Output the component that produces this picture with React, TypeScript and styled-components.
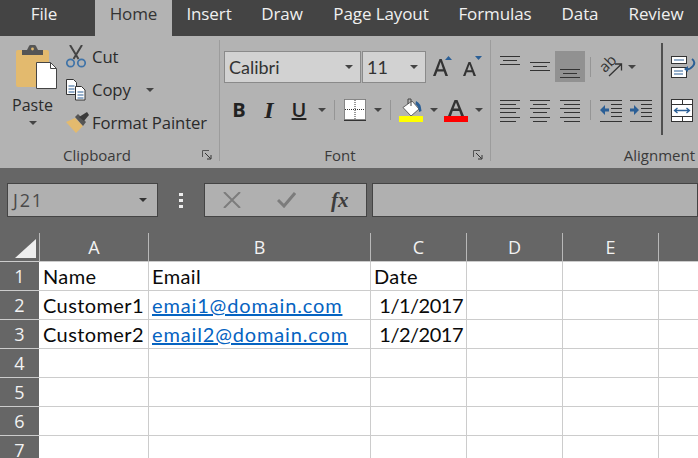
import * as React from "react";
import styled, { createGlobalStyle } from "styled-components";

const GlobalStyle = createGlobalStyle`
  html, body { margin: 0; padding: 0; background: #fff; }
  body { font-family: "Open Sans", "Liberation Sans", sans-serif; }
`;

const Page = styled.div`
  width: 698px;
  height: 458px;
  overflow: hidden;
  display: flex;
  flex-direction: column;
`;

/* ---- tabs ---- */
const TabBar = styled.div`
  height: 36px;
  flex: none;
  background: #444444;
  display: flex;
`;

const Tab = styled.div<{ $active?: boolean; $width: number; $padRight?: number }>`
  width: ${({ $width }) => $width}px;
  flex: none;
  box-sizing: border-box;
  padding: 3px ${({ $padRight }) => $padRight ?? 0}px 0 0;
  text-align: center;
  white-space: nowrap;
  font-size: 17px;
  line-height: 22px;
  letter-spacing: -0.1px;
  color: ${({ $active }) => ($active ? "#333333" : "#f0f0f0")};
  background: ${({ $active }) => ($active ? "#b3b3b3" : "transparent")};
`;

/* ---- ribbon ---- */
const Ribbon = styled.div`
  height: 132px;
  flex: none;
  background: #b3b3b3;
  display: flex;
  color: #2b2b2b;
`;

const Group = styled.div<{ $width: number }>`
  width: ${({ $width }) => $width}px;
  flex: none;
  position: relative;
  display: flex;
  flex-direction: column;
  box-sizing: border-box;
`;

const GroupBody = styled.div`
  flex: 1;
  display: flex;
  min-height: 0;
`;

const GroupLabel = styled.div<{ $padRight?: number; $end?: boolean }>`
  height: 26px;
  flex: none;
  box-sizing: border-box;
  padding: 2px ${({ $padRight }) => $padRight ?? 0}px 0 0;
  text-align: ${({ $end }) => ($end ? "right" : "center")};
  font-size: 15px;
  line-height: 22px;
  color: #3a3a3a;
`;

const GroupDivider = styled.div`
  width: 1px;
  flex: none;
  margin: 4px 0 7px;
  background: #9c9c9c;
`;

const Launcher = styled.svg`
  position: absolute;
  right: 7px;
  bottom: 8px;
  width: 10px;
  height: 10px;
`;

const Caret = styled.span<{ $gap?: number; $color?: string }>`
  display: inline-block;
  flex: none;
  width: 0;
  height: 0;
  margin-left: ${({ $gap }) => $gap ?? 0}px;
  border-left: 4px solid transparent;
  border-right: 4px solid transparent;
  border-top: 4px solid ${({ $color }) => $color ?? "#444444"};
`;

const Spacer = styled.span<{ $width: number }>`
  width: ${({ $width }) => $width}px;
  flex: none;
`;

const PasteColumn = styled.div`
  width: 66px;
  flex: none;
  padding-top: 8px;
  display: flex;
  flex-direction: column;
  align-items: center;
  box-sizing: border-box;
`;

const PasteGlyph = styled.div`
  height: 46px;
  margin-left: 8px;
`;

const PasteLabel = styled.div`
  margin-top: 3px;
  margin-left: -1px;
  font-size: 16px;
  line-height: 24px;
`;

const PasteCaret = styled.div`
  margin-top: 4px;
  height: 6px;
  display: flex;
`;

const SmallColumn = styled.div`
  padding-top: 4px;
  display: flex;
  flex-direction: column;
`;

const SmallRow = styled.div`
  height: 33px;
  display: flex;
  align-items: center;
  font-size: 16.7px;
  white-space: nowrap;
  letter-spacing: -0.1px;
`;

const SmallIcon = styled.div`
  width: 26px;
  flex: none;
  display: flex;
  align-items: center;
`;

const FontBody = styled.div`
  padding: 15px 0 0 4px;
  display: flex;
  flex-direction: column;
`;

const ComboRow = styled.div`
  height: 32px;
  display: flex;
  align-items: center;
`;

const Combo = styled.div<{ $width: number }>`
  width: ${({ $width }) => $width}px;
  height: 32px;
  box-sizing: border-box;
  flex: none;
  margin-right: 1px;
  padding: 0 7px 0 4px;
  background: #d2d2d2;
  border: 1px solid #8a8a8a;
  display: flex;
  align-items: center;
  justify-content: space-between;
  font-family: Lato, "Open Sans", sans-serif;
  font-size: 18px;
  color: #333333;
`;

const FormatRow = styled.div`
  margin-top: 13px;
  height: 28px;
  display: flex;
  align-items: center;
`;

const FormatLetter = styled.span<{ $width: number; $italic?: boolean; $under?: boolean }>`
  width: ${({ $width }) => $width}px;
  flex: none;
  text-align: center;
  font-family: ${({ $italic }) => ($italic ? '"Liberation Serif", serif' : '"Open Sans", sans-serif')};
  font-size: ${({ $italic }) => ($italic ? 24 : 20)}px;
  line-height: 26px;
  font-weight: ${({ $under }) => ($under ? 600 : 700)};
  font-style: ${({ $italic }) => ($italic ? "italic" : "normal")};
  text-decoration: ${({ $under }) => ($under ? "underline" : "none")};
  color: #222222;
`;

const VRule = styled.div<{ $left: number; $right: number; $height?: number }>`
  width: 1px;
  height: ${({ $height }) => $height ?? 20}px;
  flex: none;
  margin: 0 ${({ $right }) => $right}px 0 ${({ $left }) => $left}px;
  background: #959595;
`;

const AlignBody = styled.div`
  padding: 15px 0 0 4px;
  display: grid;
  grid-template-columns: repeat(3, 30px) 11px 30px 30px;
  grid-template-rows: 31px 28px;
  row-gap: 14px;
  justify-items: center;
  align-items: center;
`;

const AlignCell = styled.div<{ $active?: boolean }>`
  width: 30px;
  height: 100%;
  display: flex;
  align-items: center;
  justify-content: center;
  background: ${({ $active }) => ($active ? "#919191" : "transparent")};
`;

const OrientCell = styled.div`
  grid-column: span 2;
  justify-self: start;
  display: flex;
  align-items: center;
  padding-left: 4px;

  svg {
    overflow: visible;
  }
`;

const ThickRule = styled.div`
  position: absolute;
  left: 170px;
  top: 7px;
  width: 2px;
  height: 92px;
  background: #4f4f4f;
`;

const WrapColumn = styled.div`
  position: absolute;
  left: 180px;
  top: 20px;
  display: flex;
  flex-direction: column;
  gap: 19px;

  svg {
    display: block;
  }
`;

/* ---- formula bar ---- */
const FormulaBar = styled.div`
  height: 65px;
  flex: none;
  background: #666666;
  box-sizing: border-box;
  padding: 15px 0 0 7px;
  display: flex;
  align-items: flex-start;
`;

const FieldBox = styled.div<{ $width?: number }>`
  height: 34px;
  box-sizing: border-box;
  flex: ${({ $width }) => ($width ? "none" : "1")};
  width: ${({ $width }) => ($width ? `${$width}px` : "auto")};
  background: #b0b0b0;
  border: 1px solid #444444;
  display: flex;
  align-items: center;
`;

const NameBox = styled(FieldBox)`
  padding: 0 10px 0 5px;
  justify-content: space-between;
  font-size: 18px;
  letter-spacing: 1.8px;
  color: #4a4a4a;
`;

const Dots = styled.div`
  width: 46px;
  flex: none;
  height: 34px;
  padding-right: 1px;
  box-sizing: border-box;
  display: flex;
  flex-direction: column;
  align-items: center;
  justify-content: center;
  gap: 3px;

  span {
    width: 4px;
    height: 3px;
    background: #eeeeee;
  }
`;

const ActionBox = styled(FieldBox)`
  margin-right: 5px;
  padding-left: 18px;
  gap: 36px;
`;

const FxLabel = styled.span`
  margin-left: -1px;
  font-family: "Liberation Serif", serif;
  font-weight: 700;
  font-style: italic;
  font-size: 21px;
  color: #3c3c3c;
`;

/* ---- sheet ---- */
const Sheet = styled.div`
  flex: 1;
  display: grid;
  grid-template-columns: 39px 109px 222px 96px 96px 96px 40px;
  grid-template-rows: repeat(8, 29px);
  font-family: Lato, "Open Sans", sans-serif;
  background: #ffffff;
  overflow: hidden;
`;

const Corner = styled.div`
  background: #666666;
  border-bottom: 1px solid #cccccc;
  box-sizing: border-box;
  display: flex;
  align-items: flex-end;
  justify-content: flex-end;
  padding: 0 3px 3px 0;
`;

const ColHead = styled.div`
  background: #666666;
  border-left: 1px solid #b8b8b8;
  border-bottom: 1px solid #cccccc;
  box-sizing: border-box;
  display: flex;
  align-items: center;
  justify-content: center;
  font-family: "Open Sans", sans-serif;
  font-size: 18px;
  color: #f2f2f2;
`;

const RowHead = styled.div`
  background: #666666;
  border-bottom: 1px solid #cccccc;
  box-sizing: border-box;
  display: flex;
  align-items: center;
  justify-content: center;
  font-family: "Open Sans", sans-serif;
  font-size: 18px;
  color: #f2f2f2;
`;

const Cell = styled.div<{ $align?: "left" | "right"; $first?: boolean }>`
  border-left: ${({ $first }) => ($first ? "none" : "1px solid #cccccc")};
  border-bottom: 1px solid #cccccc;
  box-sizing: border-box;
  display: flex;
  align-items: center;
  justify-content: ${({ $align }) => ($align === "right" ? "flex-end" : "flex-start")};
  padding: 1px 3px 0 ${({ $first }) => ($first ? 4 : 3)}px;
  font-size: 20px;
  line-height: 27px;
  letter-spacing: ${({ $align }) => ($align === "right" ? -0.5 : 0.4)}px;
  color: #0a0a0a;
  white-space: nowrap;
  overflow: hidden;
`;

const LinkText = styled.span`
  color: #0563c1;
  letter-spacing: 0.85px;
  text-decoration: underline;
`;

/* ---- icons ---- */
const PasteIcon = () => (
  <svg width="42" height="46" viewBox="0 0 42 46">
    <rect x="0" y="6" width="33" height="37" rx="2" fill="#e3ba6e" />
    <path d="M6 6h5l2-4q.5-1 1.500-1h4q1 0 1.500 1l2 4h5v5H6z" fill="#555555" />
    <circle cx="16.500" cy="5" r="1.400" fill="#e3ba6e" />
    <path d="M20.500 18.500h14l6 6v20h-20z" fill="#ffffff" stroke="#444444" />
    <path d="M34.500 18.500v6h6" fill="none" stroke="#444444" />
  </svg>
);

const CutIcon = () => (
  <svg width="20" height="23" viewBox="0 0 20 23">
    <path d="M4 0l8.500 14M16 0L7.500 14" stroke="#444444" strokeWidth="2" />
    <circle cx="4.500" cy="18" r="3.700" fill="none" stroke="#3f73a8" strokeWidth="1.700" />
    <circle cx="15.500" cy="18" r="3.700" fill="none" stroke="#3f73a8" strokeWidth="1.700" />
  </svg>
);

const CopyIcon = () => (
  <svg width="20" height="22" viewBox="0 0 20 22">
    <path d="M.5.500h7l3 3v12H.500z" fill="#ffffff" stroke="#333333" />
    <path d="M2.500 7h6M2.500 10h6M2.500 13h6" stroke="#2b5f96" />
    <path d="M9.500 7.500h6l3.500 3.500v10H9.500z" fill="#ffffff" stroke="#333333" />
    <path d="M11.500 13h6M11.500 16h6M11.500 19h6" stroke="#2b5f96" />
  </svg>
);

const BrushIcon = () => (
  <svg width="23" height="21" viewBox="0 0 23 21">
    <path d="M0 10l9-4 8 8-7 7z" fill="#e3ba6e" />
    <path d="M9 5l3-3 8 8-3 4z" fill="#555555" />
    <path d="M13 5l8-5 2 3-5 6z" fill="#3a3a3a" />
  </svg>
);

const LauncherIcon = () => (
  <Launcher viewBox="0 0 10 10">
    <path d="M.5 7V.5H7" fill="none" stroke="#555555" />
    <path d="M3 3l5.500 5.500M9 5v4H5" fill="none" stroke="#333333" />
  </Launcher>
);

const GrowIcon = () => (
  <svg width="20" height="24" viewBox="0 0 20 24">
    <path d="M1 21L7.500 4h2.200L16 21h-2.600l-1.600-4.600H5.300L3.600 21zM6.100 14.200h4.900L8.600 7z" fill="#333333" fillRule="evenodd" />
    <path d="M13 5l3.500-4L20 5z" fill="#2b5f96" />
  </svg>
);

const ShrinkIcon = () => (
  <svg width="20" height="24" viewBox="0 0 20 24">
    <path d="M1 21L6.500 7h2L14 21h-2.400l-1.300-3.800H4.700L3.400 21zM5.400 15.200h4.200L7.500 9.500z" fill="#333333" fillRule="evenodd" />
    <path d="M13 1h7l-3.500 4z" fill="#2b5f96" />
  </svg>
);

const BordersIcon = () => (
  <svg width="22" height="22" viewBox="0 0 22 22">
    <rect x="0.500" y="0.500" width="21" height="20" fill="#ffffff" stroke="#333333" strokeDasharray="1 1" />
    <path d="M11 1v20M1 10.500h20" stroke="#333333" strokeDasharray="1 1" />
    <path d="M0 21.500h22" stroke="#333333" />
  </svg>
);

const FillIcon = () => (
  <svg width="24" height="25" viewBox="0 0 24 25">
    <path d="M4 9.500l9-6.500 7 8-8 7z" fill="#ffffff" stroke="#444444" strokeWidth="0.800" />
    <path d="M12 8V1H9v5" fill="none" stroke="#444444" />
    <path d="M17 3q5 2 5.500 10l-2.500 1q0-5-3.500-8z" fill="#2b5f96" />
    <rect x="0" y="18" width="24" height="6" fill="#ffff00" />
  </svg>
);

const ColorAIcon = () => (
  <svg width="24" height="25" viewBox="0 0 24 25">
    <path d="M4 18L10.500 2h3L20 18h-3l-1.700-5H8.700L7 18zM9.600 10.500h4.800L12 4.500z" fill="#333333" fillRule="evenodd" />
    <rect x="0" y="18" width="24" height="6" fill="#ff0000" />
  </svg>
);

type Line = [number, number, number];

const LinesIcon = ({ lines }: { lines: Line[] }) => (
  <svg width="22" height="24" viewBox="0 0 22 24">
    {lines.map(([x1, x2, y]) => (
      <path key={`${x1}-${x2}-${y}`} d={`M${x1} ${y}.5H${x2}`} stroke="#333333" />
    ))}
  </svg>
);

const IndentIcon = ({ right }: { right?: boolean }) => (
  <svg width="24" height="24" viewBox="0 0 24 24">
    <path d="M1 2.500h22M12 6.500h11M12 10.500h11M12 14.500h11M12 18.500h11M1 23.500h22" stroke="#333333" />
    <path
      d={right ? "M1 10.500h4V7l5 5-5 5v-3.500H1z" : "M10 10.500H6V7l-5 5 5 5v-3.500h4z"}
      fill="#2b5f96"
    />
  </svg>
);

const OrientIcon = () => (
  <svg width="26" height="24" viewBox="0 0 26 24">
    <text x="8" y="13.500" textAnchor="middle" fontFamily="Open Sans, sans-serif" fontSize="15" fill="#333333" transform="rotate(-45 8 9)">ab</text>
    <path d="M9 21L21 9.500M15 9h6.500v6.500" fill="none" stroke="#333333" strokeWidth="1.300" />
  </svg>
);

const WrapIcon = () => (
  <svg width="26" height="24" viewBox="0 0 26 24">
    <rect x="0.500" y="0.500" width="15" height="7" fill="#ffffff" stroke="#333333" />
    <rect x="0.500" y="11.500" width="15" height="10" fill="#ffffff" stroke="#333333" />
    <path d="M3 4h10M3 15h9M3 18h9" stroke="#2b5f96" />
    <path d="M21 3q4 3 1 7t-8 3" fill="none" stroke="#2b5f96" strokeWidth="2" />
    <path d="M13 13l4-3v6z" fill="#2b5f96" />
  </svg>
);

const MergeIcon = () => (
  <svg width="23" height="24" viewBox="0 0 23 24">
    <rect x="0.500" y="0.500" width="21" height="22" fill="#ffffff" stroke="#333333" />
    <path d="M1 5.500h21M1 17.500h21M11.500 1v5M11.500 17v5" stroke="#333333" />
    <path d="M4 11.500h14M6.500 9l-3 2.500 3 2.500M15.500 9l3 2.500-3 2.500" fill="none" stroke="#2b5f96" strokeWidth="1.300" />
  </svg>
);

const CrossIcon = () => (
  <svg width="18" height="16" viewBox="0 0 18 16">
    <path d="M1 0l16 16M17 0L1 16" stroke="#7c7c7c" strokeWidth="2" />
  </svg>
);

const CheckIcon = () => (
  <svg width="19" height="16" viewBox="0 0 19 16">
    <path d="M1 8l6 6L18 1" fill="none" stroke="#7c7c7c" strokeWidth="3" />
  </svg>
);

const CornerTriangle = () => (
  <svg width="21" height="19" viewBox="0 0 21 19">
    <path d="M21 0v19H0z" fill="#eeeeee" />
  </svg>
);

/* ---- data ---- */
const tabs = [
  { label: "File", width: 95, padRight: 7 },
  { label: "Home", width: 77, active: true },
  { label: "Insert", width: 74 },
  { label: "Draw", width: 72 },
  { label: "Page Layout", width: 126 },
  { label: "Formulas", width: 102 },
  { label: "Data", width: 68 },
  { label: "Review", width: 84 },
];

const alignRows: { lines: Line[]; active?: boolean }[] = [
  { lines: [[1, 21, 1], [4, 18, 5], [1, 21, 9]] },
  { lines: [[1, 21, 7], [4, 18, 11], [1, 21, 15]] },
  { lines: [[1, 21, 14], [4, 18, 18], [1, 21, 22]], active: true },
];

const textRows: Line[][] = [
  [[1, 21, 2], [1, 17, 6], [1, 21, 10], [1, 17, 14], [1, 21, 19], [1, 17, 23]],
  [[1, 21, 2], [4, 18, 6], [1, 21, 10], [4, 18, 14], [1, 21, 19], [4, 18, 23]],
  [[1, 21, 2], [5, 21, 6], [1, 21, 10], [5, 21, 14], [1, 21, 19], [5, 21, 23]],
];

const columns = ["A", "B", "C", "D", "E"];

interface RowData {
  readonly name?: string;
  readonly email?: string;
  readonly date?: string;
  readonly link?: boolean;
  readonly dateRight?: boolean;
}

const rows: RowData[] = [
  { name: "Name", email: "Email", date: "Date" },
  { name: "Customer1", email: "emai1@domain.com", date: "1/1/2017", link: true, dateRight: true },
  { name: "Customer2", email: "email2@domain.com", date: "1/2/2017", link: true, dateRight: true },
  {},
  {},
  {},
  {},
];

export default function App(): JSX.Element {
  return (
    <Page>
      <GlobalStyle />
      <TabBar>
        {tabs.map((t) => (
          <Tab key={t.label} $active={t.active} $width={t.width} $padRight={t.padRight}>
            {t.label}
          </Tab>
        ))}
      </TabBar>

      <Ribbon>
        <Group $width={219}>
          <GroupBody>
            <PasteColumn>
              <PasteGlyph>
                <PasteIcon />
              </PasteGlyph>
              <PasteLabel>Paste</PasteLabel>
              <PasteCaret>
                <Caret />
              </PasteCaret>
            </PasteColumn>
            <SmallColumn>
              <SmallRow>
                <SmallIcon><CutIcon /></SmallIcon>Cut
              </SmallRow>
              <SmallRow>
                <SmallIcon><CopyIcon /></SmallIcon>Copy<Caret $gap={15} />
              </SmallRow>
              <SmallRow>
                <SmallIcon><BrushIcon /></SmallIcon>Format Painter
              </SmallRow>
            </SmallColumn>
          </GroupBody>
          <GroupLabel $padRight={25}>Clipboard</GroupLabel>
          <LauncherIcon />
        </Group>
        <GroupDivider />

        <Group $width={270}>
          <GroupBody>
            <FontBody>
              <ComboRow>
                <Combo $width={137}>
                  Calibri
                  <Caret />
                </Combo>
                <Combo $width={64}>
                  11
                  <Caret />
                </Combo>
                <Spacer $width={5} />
                <GrowIcon />
                <Spacer $width={10} />
                <ShrinkIcon />
              </ComboRow>
              <FormatRow>
                <FormatLetter $width={30}>B</FormatLetter>
                <FormatLetter $width={30} $italic>I</FormatLetter>
                <FormatLetter $width={30} $under>U</FormatLetter>
                <Caret $gap={4} />
                <VRule $left={8} $right={9} />
                <BordersIcon />
                <Caret $gap={8} />
                <VRule $left={8} $right={8} />
                <FillIcon />
                <Caret $gap={7} />
                <Spacer $width={6} />
                <ColorAIcon />
                <Caret $gap={7} />
              </FormatRow>
            </FontBody>
          </GroupBody>
          <GroupLabel $padRight={30}>Font</GroupLabel>
          <LauncherIcon />
        </Group>
        <GroupDivider />

        <Group $width={207}>
          <GroupBody>
            <AlignBody>
              {alignRows.map((r) => (
                <AlignCell key={r.lines[0][2]} $active={r.active}>
                  <LinesIcon lines={r.lines} />
                </AlignCell>
              ))}
              <VRule $left={0} $right={0} />
              <OrientCell>
                <OrientIcon />
                <Caret $gap={2} />
              </OrientCell>
              {textRows.map((lines) => (
                <AlignCell key={lines[1][0] * 10 + lines[1][1]}>
                  <LinesIcon lines={lines} />
                </AlignCell>
              ))}
              <VRule $left={0} $right={0} />
              <IndentIcon />
              <IndentIcon right />
            </AlignBody>
            <ThickRule />
            <WrapColumn>
              <WrapIcon />
              <MergeIcon />
            </WrapColumn>
          </GroupBody>
          <GroupLabel $end $padRight={3}>Alignment</GroupLabel>
        </Group>
      </Ribbon>

      <FormulaBar>
        <NameBox $width={151}>
          J21
          <Caret $color="#333333" />
        </NameBox>
        <Dots>
          <span />
          <span />
          <span />
        </Dots>
        <ActionBox $width={163}>
          <CrossIcon />
          <CheckIcon />
          <FxLabel>fx</FxLabel>
        </ActionBox>
        <FieldBox />
      </FormulaBar>

      <Sheet>
        <Corner>
          <CornerTriangle />
        </Corner>
        {columns.map((c) => (
          <ColHead key={c}>{c}</ColHead>
        ))}
        <ColHead />
        {rows.map((r, i) => (
          <React.Fragment key={i}>
            <RowHead>{i + 1}</RowHead>
            <Cell $first>{r.name}</Cell>
            <Cell>{r.link ? <LinkText>{r.email}</LinkText> : r.email}</Cell>
            <Cell $align={r.dateRight ? "right" : "left"}>{r.date}</Cell>
            <Cell />
            <Cell />
            <Cell />
          </React.Fragment>
        ))}
      </Sheet>
    </Page>
  );
}
